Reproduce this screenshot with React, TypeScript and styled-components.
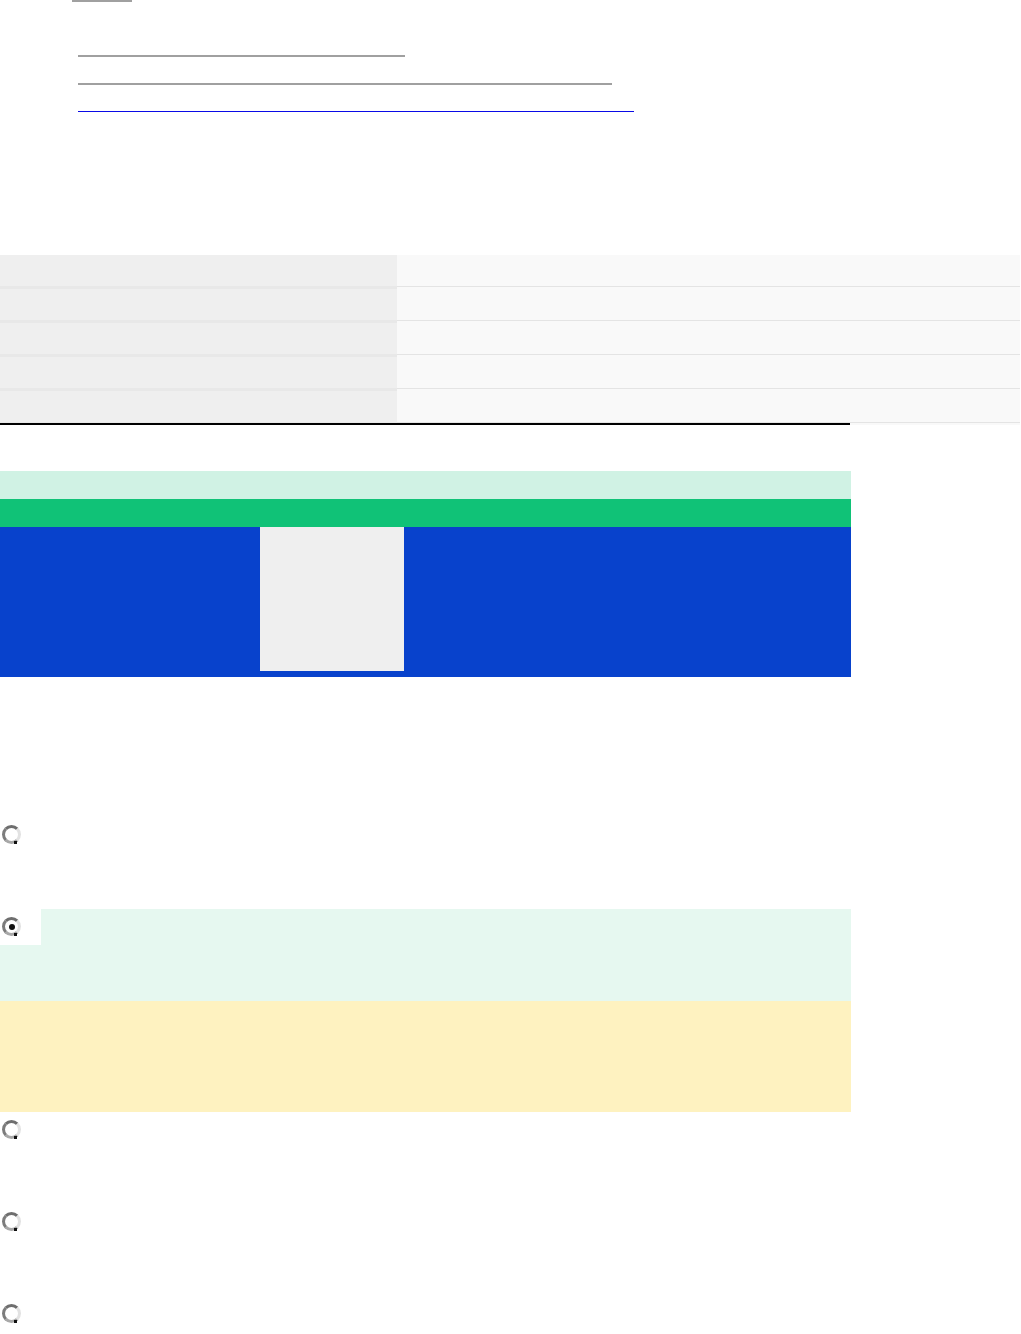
import React from "react";
import styled, { createGlobalStyle } from "styled-components";

const GlobalStyle = createGlobalStyle`
  html, body {
    margin: 0;
    padding: 0;
    background: #ffffff;
    font-family: "Liberation Sans", Arial, sans-serif;
  }
`;

const Page = styled.div`
  width: 1021px;
  display: flex;
  flex-direction: column;
`;

const TabStrip = styled.div`
  display: flex;
  padding-left: 72px;
`;

const TabIndicator = styled.span`
  width: 60px;
  height: 2px;
  background: #a0a0a0;
`;

const LinkList = styled.ul`
  list-style: none;
  margin: 53px 0 0;
  padding: 0 0 0 78px;
  display: flex;
  flex-direction: column;
  gap: 26px;
`;

const LinkLine = styled.li<{ $w: number; $blue?: boolean }>`
  width: ${(p) => p.$w}px;
  height: ${(p) => (p.$blue ? 1 : 2)}px;
  background: ${(p) => (p.$blue ? "#0a0ae6" : "#a0a0a0")};
`;

const Table = styled.div`
  margin-top: 143px;
  display: grid;
  grid-template-columns: 397px 1fr;
`;

const KeyCell = styled.div`
  height: 31px;
  background: #efefef;
  border-bottom: 3px solid #e8e8e8;
`;

const ValueCell = styled.div`
  height: 34px;
  margin-right: 1px;
  background: linear-gradient(
    to bottom,
    #f9f9f9 31px,
    #e4e4e4 31px,
    #e4e4e4 32px,
    #f9f9f9 32px
  );
`;

const Rule = styled.div`
  width: 850px;
  height: 2px;
  margin-top: -2px;
  background: #000000;
  position: relative;
`;

const Banner = styled.div`
  margin-top: 46px;
  width: 851px;
  display: flex;
  flex-direction: column;
`;

const Stripe = styled.div<{ $bg: string }>`
  height: 28px;
  background: ${(p) => p.$bg};
`;

const Hero = styled.div`
  height: 150px;
  background: #0842cc;
  display: flex;
  padding-left: 260px;
`;

const Poster = styled.div`
  width: 144px;
  height: 144px;
  background: #efefef;
`;

const Options = styled.div`
  margin-top: 140px;
  width: 851px;
  display: flex;
  flex-direction: column;
`;

const Option = styled.div<{ $active?: boolean }>`
  height: 92px;
  background: ${(p) => (p.$active ? "#e6f8f0" : "transparent")};
`;

const OptionLabel = styled.label<{ $active?: boolean }>`
  display: block;
  width: 39px;
  height: 28px;
  padding: 8px 0 0 2px;
  background: ${(p) => (p.$active ? "#ffffff" : "transparent")};
`;

const Radio = styled.span<{ $checked?: boolean }>`
  position: relative;
  display: flex;
  align-items: center;
  justify-content: center;
  box-sizing: border-box;
  width: 19px;
  height: 19px;
  border-radius: 50%;
  border: 3px solid;
  border-color: #6e6e6e #e2e2e2 #a8a8a8 #7c7c7c;
  background: #ffffff;

  &::after {
    content: "";
    width: 6px;
    height: 6px;
    border-radius: 50%;
    background: ${(p) => (p.$checked ? "#111111" : "transparent")};
  }

  &::before {
    content: "";
    position: absolute;
    right: 1px;
    bottom: -3px;
    width: 3px;
    height: 3px;
    background: #111111;
  }
`;

const Hint = styled.div`
  height: 111px;
  background: #fef2c0;
`;

const rows = [0, 1, 2, 3, 4];
const options = [false, true, null, false, false, false];

export default function App() {
  return (
    <>
      <GlobalStyle />
      <Page>
        <TabStrip>
          <TabIndicator />
        </TabStrip>
        <LinkList>
          <LinkLine $w={327} />
          <LinkLine $w={534} />
          <LinkLine $w={556} $blue />
        </LinkList>
        <Table>
          {rows.map((r) => (
            <React.Fragment key={r}>
              <KeyCell />
              <ValueCell />
            </React.Fragment>
          ))}
        </Table>
        <Rule />
        <Banner>
          <Stripe $bg="#d0f2e4" />
          <Stripe $bg="#10c277" />
          <Hero>
            <Poster />
          </Hero>
        </Banner>
        <Options>
          {options.map((checked, i) =>
            checked === null ? (
              <Hint key={i} />
            ) : (
              <Option key={i} $active={checked}>
                <OptionLabel $active={checked}>
                  <Radio $checked={checked} />
                </OptionLabel>
              </Option>
            )
          )}
        </Options>
      </Page>
    </>
  );
}
